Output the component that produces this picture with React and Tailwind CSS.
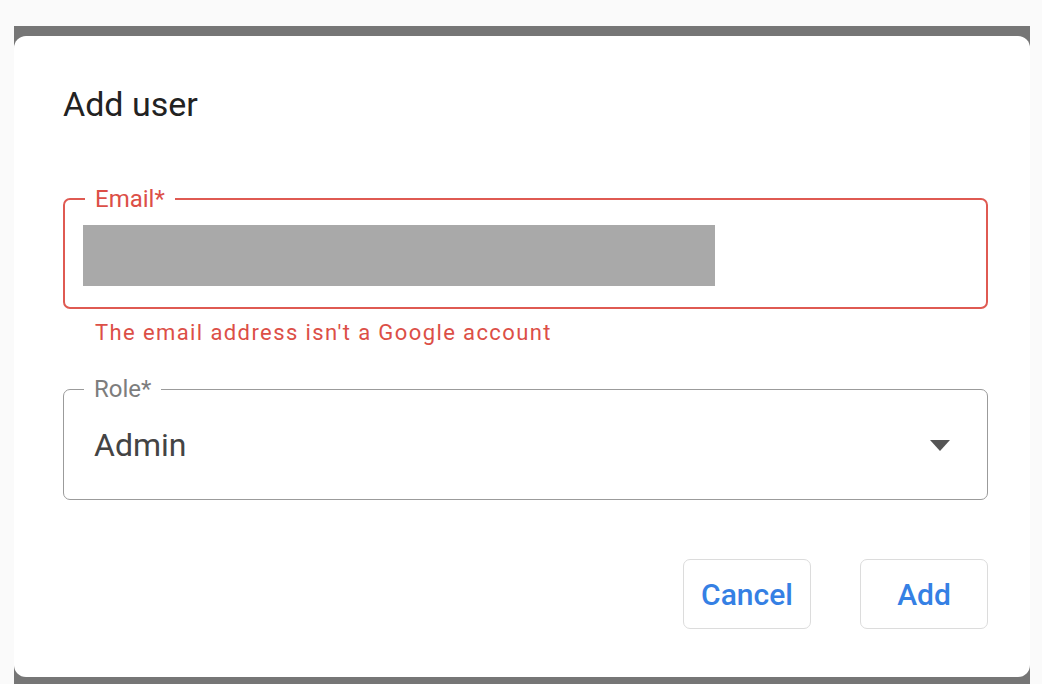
const font = { fontFamily: 'Roboto, "Liberation Sans", sans-serif' };

function Field({ label, error, children, className }) {
  return (
    <fieldset
      className={`rounded-[7px] border-solid ${
        error ? 'border-2 border-[#df5a52]' : 'border-[1.5px] border-[#9b9b9b]'
      } ${className}`}
    >
      <legend
        className={`ml-[20px] px-[10px] text-[24px] leading-[24px] ${
          error ? 'text-[#dc4f47]' : 'text-[#7d7d7d]'
        }`}
      >
        {label}
      </legend>
      {children}
    </fieldset>
  );
}

export default function App() {
  return (
    <div className="h-[684px] w-[1042px] overflow-hidden bg-[#fafafa]" style={font}>
      <div className="ml-[14px] mt-[26px] h-[658px] w-[1016px] bg-[#767676] pt-[10px]">
        <div className="h-[641px] rounded-[12px] bg-white pl-[49px] pr-[42px] pt-[48px]">
          <h1 className="text-[34px] font-normal leading-[40px] text-[#222]">Add user</h1>

          <Field label="Email*" error className="mt-[63px]">
            <div className="mb-[21px] ml-[18px] mt-[14px] h-[61px] w-[632px] bg-[#a9a9a9]" />
          </Field>
          <p className="ml-[32px] mt-[12px] text-[22px] leading-[24px] tracking-[1.4px] text-[#dc4f47]">
            The email address isn't a Google account
          </p>

          <Field label="Role*" className="mt-[32px]">
            <div className="mb-[35px] ml-[30px] mr-[37px] mt-[25px] flex items-center justify-between">
              <span className="text-[32px] leading-[38px] text-[#444]">Admin</span>
              <svg width="20" height="11" viewBox="0 0 20 11" className="mt-[1px]">
                <path d="M0 0 L20 0 L10 11 Z" fill="#555" />
              </svg>
            </div>
          </Field>

          <div className="mt-[59px] flex justify-end gap-[49px]">
            <button className="h-[70px] w-[128px] rounded-[7px] border-[1.5px] border-[#dcdcdc] bg-white text-[30px] font-medium text-[#3580e4]">
              Cancel
            </button>
            <button className="h-[70px] w-[128px] rounded-[7px] border-[1.5px] border-[#dcdcdc] bg-white text-[30px] font-medium text-[#3580e4]">
              Add
            </button>
          </div>
        </div>
      </div>
    </div>
  );
}
